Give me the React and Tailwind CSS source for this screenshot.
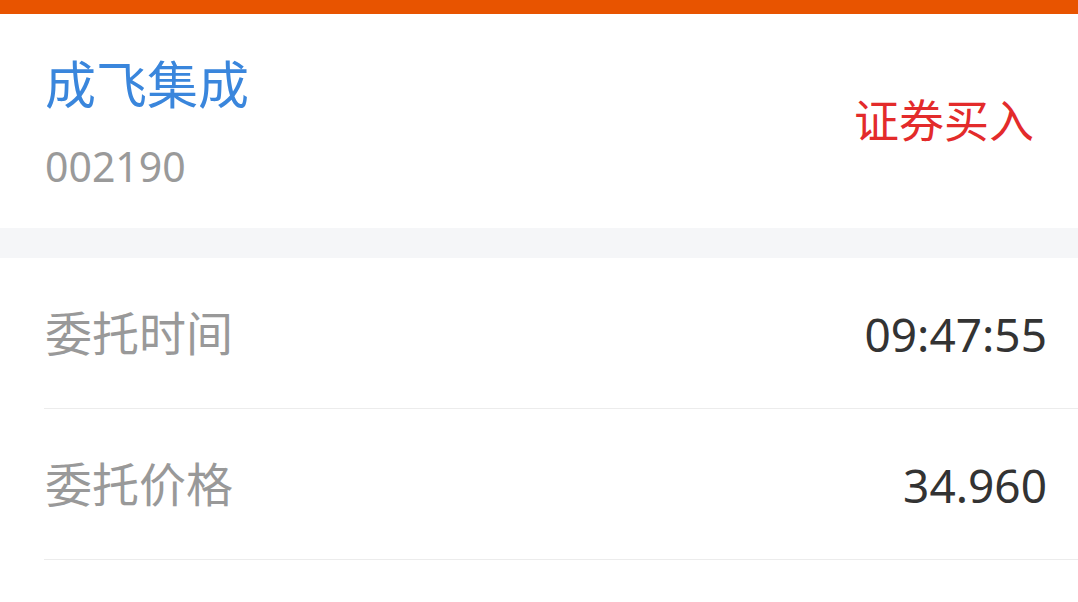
const rows = [
  { label: "委托时间", value: "09:47:55" },
  { label: "委托价格", value: "34.960" },
];

const App = () => {
  return (
    <div
      className="w-[1078px] h-[602px] overflow-hidden bg-white"
      style={{ fontFamily: '"Noto Sans", "Noto Sans CJK SC", sans-serif' }}
    >
      {/* top bar */}
      <div className="h-[14px] bg-[#e85400]" />

      {/* stock header */}
      <div className="h-[214px] flex justify-between pl-[45px] pr-[44px]">
        <div className="flex flex-col pt-[40px] gap-[30px]">
          <div className="text-[51px] leading-[60px] text-[#3a86dc]">成飞集成</div>
          <div className="text-[41px] leading-[44px] text-[#9a9a9a]">002190</div>
        </div>
        <div className="flex items-center">
          <span className="text-[45px] leading-[50px] text-[#e32b2b]">证券买入</span>
        </div>
      </div>

      <div className="h-[30px] bg-[#f5f6f8]" />

      {/* detail rows */}
      <div className="flex flex-col">
        {rows.map((row) => (
          <div
            key={row.label}
            className="ml-[44px] h-[151px] flex items-center justify-between pl-[1px] pr-[31px] border-b border-[#ececec]"
          >
            <span className="text-[47px] text-[#999999]">{row.label}</span>
            <span className="text-[46px] text-[#333333] pt-[2px]">{row.value}</span>
          </div>
        ))}
      </div>
    </div>
  );
};

export default App;
